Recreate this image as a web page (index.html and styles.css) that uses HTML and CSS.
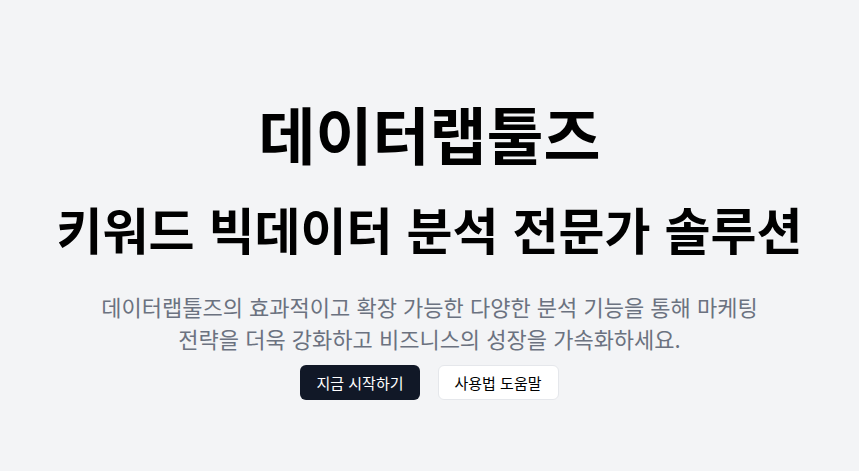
FILE: index.html
```html
<!DOCTYPE html>
<html lang="ko">

<head>
    <meta charset="UTF-8">
    <meta name="viewport" content="width=device-width, initial-scale=1.0">
    <title>데이터랩툴즈</title>
    <link rel="stylesheet" href="styles.css">
</head>

<body>
    <main class="hero">
        <h1 class="hero-title">데이터랩툴즈</h1>
        <h2 class="hero-subtitle">키워드 빅데이터 분석 전문가 솔루션</h2>
        <p class="hero-text">데이터랩툴즈의 효과적이고 확장 가능한 다양한 분석 기능을 통해 마케팅 전략을 더욱 강화하고 비즈니스의 성장을 가속화하세요.</p>
        <div class="hero-actions">
            <a href="#" class="btn btn-dark">지금 시작하기</a>
            <a href="#" class="btn btn-light">사용법 도움말</a>
        </div>
    </main>
</body>

</html>
```

FILE: styles.css
```css
body {
    font-family: "Noto Sans CJK KR", "Noto Sans", sans-serif;
    background-color: #f3f4f6;
    margin: 0;
    padding: 0;
    color: #000000;
}

.hero {
    display: flex;
    flex-direction: column;
    align-items: center;
    text-align: center;
    padding-top: 102px;
    word-break: keep-all;
}

.hero-title {
    font-size: 62px;
    font-weight: 700;
    line-height: 1;
    margin: 0;
}

.hero-subtitle {
    font-size: 50px;
    font-weight: 700;
    line-height: 1;
    margin: 39px 0 0;
}

.hero-text {
    max-width: 700px;
    font-size: 22px;
    line-height: 32px;
    color: #6b7280;
    margin: 37px 0 11px;
}

.hero-actions {
    display: flex;
    gap: 18px;
}

.btn {
    display: inline-block;
    padding: 7px 16px;
    font-size: 15px;
    line-height: 21px;
    border-radius: 6px;
    text-decoration: none;
}

.btn-dark {
    background-color: #111827;
    color: #ffffff;
}

.btn-light {
    background-color: #ffffff;
    color: #000000;
    border: 1px solid #e5e7eb;
    padding: 6px 16px;
}
```
